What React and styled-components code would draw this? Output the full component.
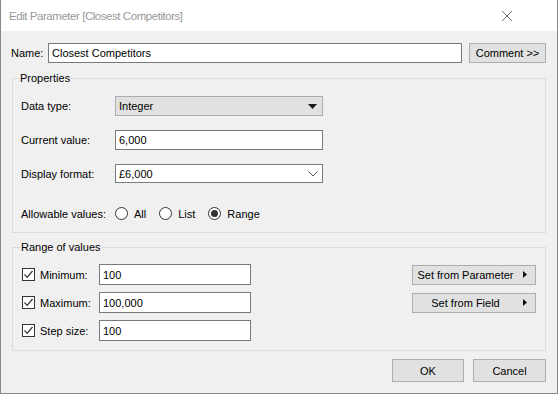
import styled, { createGlobalStyle } from "styled-components";

const GlobalStyle = createGlobalStyle`
    html, body {
        margin: 0;
        padding: 0;
        background: #ffffff;
    }
    body {
        font-family: "Liberation Sans", Arial, sans-serif;
        font-size: 11px;
        color: #000000;
    }
`

function CloseIcon() {
    return (
        <svg width="12" height="12" viewBox="0 0 12 12">
            <path d="M1 1 L11 11 M11 1 L1 11" stroke="#6d6d6d" strokeWidth="1" fill="none" />
        </svg>
    )
}

function Caret() {
    return (
        <svg width="9" height="5" viewBox="0 0 9 5">
            <path d="M0 0 H9 L4.5 5 Z" fill="#1a1a1a" />
        </svg>
    )
}

function Chevron() {
    return (
        <svg width="10" height="6" viewBox="0 0 10 6">
            <path d="M0.5 0.5 L5 5 L9.5 0.5" stroke="#555" strokeWidth="1" fill="none" />
        </svg>
    )
}

function RightTriangle() {
    return (
        <svg width="4" height="7" viewBox="0 0 4 7">
            <path d="M0 0 L4 3.5 L0 7 Z" fill="#111" />
        </svg>
    )
}

function Check() {
    return (
        <svg width="11" height="11" viewBox="0 0 11 11">
            <path d="M1.5 5.5 L4.2 8.3 L9.5 2" stroke="#333" strokeWidth="1.2" fill="none" />
        </svg>
    )
}

function Radio({ checked, label }) {
    return (
        <RadioItem>
            <RadioCircle>{checked && <RadioDot />}</RadioCircle>
            {label}
        </RadioItem>
    )
}

function RangeRow({ label, value, children }) {
    return (
        <RangeLine>
            <CheckBox><Check /></CheckBox>
            <RangeLabel>{label}</RangeLabel>
            <TextBox width="152px" height="21px">{value}</TextBox>
            <RangeButtonSlot>{children}</RangeButtonSlot>
        </RangeLine>
    )
}

function App() {
    return (
        <>
            <GlobalStyle />
            <Window>
                <TitleBar>
                    <Title>Edit Parameter [Closest Competitors]</Title>
                    <CloseButton><CloseIcon /></CloseButton>
                </TitleBar>
                <Body>
                    <NameRow>
                        <NameLabel>Name:</NameLabel>
                        <TextBox grow height="20px">Closest Competitors</TextBox>
                        <Button width="77px" height="20px">Comment &gt;&gt;</Button>
                    </NameRow>

                    <Group top="9px" padTop="11px" padBottom="12px" padLeft="8px">
                        <Legend>Properties</Legend>
                        <PropRow>
                            <PropLabel>Data type:</PropLabel>
                            <Combo>
                                <span>Integer</span>
                                <Caret />
                            </Combo>
                        </PropRow>
                        <PropRow>
                            <PropLabel>Current value:</PropLabel>
                            <TextBox width="208px" height="20px">6,000</TextBox>
                        </PropRow>
                        <PropRow>
                            <PropLabel>Display format:</PropLabel>
                            <Dropdown>
                                <span>£6,000</span>
                                <Chevron />
                            </Dropdown>
                        </PropRow>
                        <RadioRow>
                            <PropLabel>Allowable values:</PropLabel>
                            <RadioGroup>
                                <Radio label="All" />
                                <Radio label="List" />
                                <Radio checked label="Range" />
                            </RadioGroup>
                        </RadioRow>
                    </Group>

                    <Group top="8px" padTop="10px" padBottom="9px" padLeft="9px">
                        <Legend>Range of values</Legend>
                        <RangeRow label="Minimum:" value="100">
                            <SideButton>
                                <SideText>Set from Parameter</SideText>
                                <RightTriangle />
                            </SideButton>
                        </RangeRow>
                        <RangeRow label="Maximum:" value="100,000">
                            <SideButton>
                                <SideText>Set from Field</SideText>
                                <RightTriangle />
                            </SideButton>
                        </RangeRow>
                        <RangeRow label="Step size:" value="100" />
                    </Group>

                    <Footer>
                        <Button width="72px" height="23px">OK</Button>
                        <Button width="73px" height="23px">Cancel</Button>
                    </Footer>
                </Body>
            </Window>
        </>
    )
}

export default App;


const Window = styled.div`
    width: 558px;
    height: 394px;
    box-sizing: border-box;
    border: 1px solid #8a8a8a;
    border-top: none;
    display: flex;
    flex-direction: column;
    background: #f0f0f0;
`

const TitleBar = styled.div`
    height: 31px;
    flex: none;
    background: #ffffff;
    display: flex;
    align-items: center;
    justify-content: space-between;
    padding: 0 44px 0 8px;
`

const Title = styled.div`
    font-size: 11.5px;
    letter-spacing: -0.45px;
    color: #999999;
    margin-top: 1px;
`

const CloseButton = styled.div`
    display: flex;
    margin-top: 1px;
`

const Body = styled.div`
    flex: 1;
    display: flex;
    flex-direction: column;
    padding: 12px 11px 0 10px;
`

const NameRow = styled.div`
    display: flex;
    align-items: center;
`

const NameLabel = styled.div`
    width: 37px;
    flex: none;
`

const TextBox = styled.div`
    box-sizing: border-box;
    ${props => props.grow ? 'flex: 1;' : `width: ${props.width};`}
    height: ${props => props.height};
    border: 1px solid #7a7a7a;
    background: #ffffff;
    display: flex;
    align-items: center;
    padding: 0 3px;
    margin-right: ${props => props.grow ? '7px' : '0'};
`

const Button = styled.div`
    box-sizing: border-box;
    width: ${props => props.width};
    height: ${props => props.height};
    border: 1px solid #adadad;
    background: #e1e1e1;
    display: flex;
    align-items: center;
    justify-content: center;
    flex: none;
`

const Group = styled.fieldset`
    margin: ${props => props.top} 0 0 1px;
    padding: ${props => props.padTop} 9px ${props => props.padBottom} ${props => props.padLeft};
    border: 1px solid #dcdcdc;
    display: flex;
    flex-direction: column;
    min-width: 0;
`

const Legend = styled.legend`
    padding: 0 1px;
    margin-left: -2px;
    line-height: 13px;
`

const PropRow = styled.div`
    display: flex;
    align-items: center;
    margin-bottom: 14px;
`

const PropLabel = styled.div`
    width: 94px;
    flex: none;
`

const Combo = styled.div`
    box-sizing: border-box;
    width: 208px;
    height: 20px;
    border: 1px solid #adadad;
    background: #e1e1e1;
    display: flex;
    align-items: center;
    justify-content: space-between;
    padding: 0 5px 0 3px;
`

const Dropdown = styled(Combo)`
    border-color: #7a7a7a;
    background: #ffffff;
    height: 19px;
    padding-right: 4px;
`

const RadioRow = styled.div`
    display: flex;
    align-items: center;
    margin-top: 10px;
`

const RadioGroup = styled.div`
    display: flex;
    gap: 13px;
`

const RadioItem = styled.div`
    display: flex;
    align-items: center;
    gap: 6px;
`

const RadioCircle = styled.div`
    box-sizing: border-box;
    width: 13px;
    height: 13px;
    border: 1px solid #333333;
    border-radius: 50%;
    background: #ffffff;
    display: flex;
    align-items: center;
    justify-content: center;
`

const RadioDot = styled.div`
    width: 7px;
    height: 7px;
    border-radius: 50%;
    background: #333333;
`

const RangeLine = styled.div`
    display: flex;
    align-items: center;
    margin-bottom: 7px;
    &:last-child {
        margin-bottom: 0;
    }
`

const CheckBox = styled.div`
    box-sizing: border-box;
    width: 13px;
    height: 13px;
    border: 1px solid #333333;
    background: #ffffff;
    display: flex;
    align-items: center;
    justify-content: center;
    flex: none;
`

const RangeLabel = styled.div`
    width: 59px;
    padding-left: 5px;
    flex: none;
`

const RangeButtonSlot = styled.div`
    flex: 1;
    display: flex;
    justify-content: flex-end;
`

const SideButton = styled.div`
    box-sizing: border-box;
    width: 124px;
    height: 20px;
    border: 1px solid #adadad;
    background: #e1e1e1;
    display: flex;
    align-items: center;
    gap: 5px;
    padding: 0 8px 0 0;
`

const SideText = styled.span`
    flex: 1;
    text-align: center;
`

const Footer = styled.div`
    display: flex;
    justify-content: flex-end;
    gap: 9px;
    margin-top: 8px;
`
